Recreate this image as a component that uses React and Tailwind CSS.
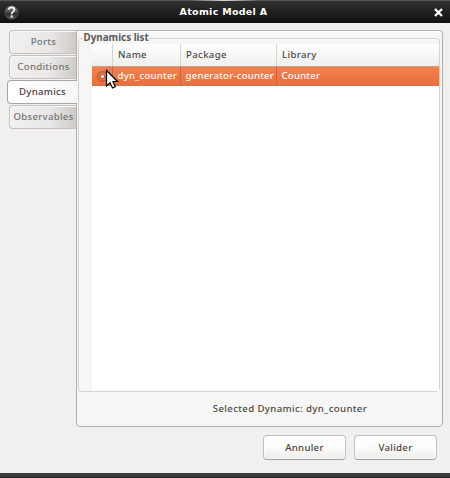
function HelpIcon() {
  return (
    <svg width="15" height="15" viewBox="0 0 15 15" className="block">
      <defs>
        <linearGradient id="orb" x1="0" y1="0" x2="0" y2="1">
          <stop offset="0" stopColor="#8c8c8c" />
          <stop offset="0.5" stopColor="#484848" />
          <stop offset="0.55" stopColor="#242424" />
          <stop offset="1" stopColor="#626262" />
        </linearGradient>
      </defs>
      <circle cx="7.5" cy="7.5" r="6.7" fill="url(#orb)" stroke="#505050" strokeWidth="0.7" />
      <path d="M4.6 4.6C5 2.9 6.1 2.3 7.6 2.3C9.5 2.3 10.4 3.2 10.4 4.7C10.4 6.7 7.7 6.7 7.6 9.3" fill="none" stroke="#f2f2f2" strokeWidth="1.8" />
      <rect x="6.6" y="10.4" width="2.1" height="2.1" fill="#f2f2f2" />
    </svg>
  );
}

function Tab({ label, active }) {
  return active ? (
    <div className="relative z-10 -mr-px h-[24px] w-[70px] rounded-l-[4px] border border-r-0 border-[#aaa69f] bg-gradient-to-r from-white to-[#f6f6f6] text-center leading-[22px] text-[#444]">
      {label}
    </div>
  ) : (
    <div className="h-[24px] w-[67px] rounded-l-[4px] border border-r-0 border-[#c5c2bd] bg-gradient-to-r from-[#f1f0ee] via-[#e9e8e6] via-60% to-[#cecbc6] pl-px text-center leading-[22px] text-[#747474] shadow-[inset_1px_1px_0_#f8f8f7]">
      {label}
    </div>
  );
}

function Button({ label }) {
  return (
    <button className="h-[25px] w-[83px] rounded-[4px] border border-[#c3c0bb] border-b-[#a19d97] bg-gradient-to-b from-white via-[#fbfbfb] to-[#ececea] text-center leading-[22px] text-[#444] shadow-[inset_0_0_0_1px_#ffffff90]">
      {label}
    </button>
  );
}

export default function App() {
  return (
    <div className="flex h-[478px] w-[450px] flex-col overflow-hidden bg-[#f1f0ee] font-['Noto_Sans',sans-serif] text-[9.6px] font-medium tracking-[0.3px] whitespace-nowrap text-[#484848]">
      <header className="relative flex h-[23px] shrink-0 items-center border-t border-[#555755] bg-gradient-to-b from-[#303130] to-[#101010] pr-[7px] pl-[4px]">
        <div className="absolute -top-px left-[190px] h-px w-[70px] bg-gradient-to-r from-transparent via-[#d5d5d5] to-transparent" />
        <HelpIcon />
        <h1 className="ml-[-6px] flex-1 text-center font-['DejaVu_Sans',sans-serif] text-[9.5px] font-bold tracking-[0.3px] text-white">
          Atomic Model A
        </h1>
        <svg width="9" height="9" viewBox="0 0 9 9">
          <path d="M1 1L8 8M8 1L1 8" stroke="white" strokeWidth="2.3" />
        </svg>
      </header>
      <main className="flex h-[404px] shrink-0 pt-[7px] pr-[7px] pl-[7px]">
        <nav className="flex w-[69px] shrink-0 flex-col items-end gap-px">
          <Tab label="Ports" />
          <Tab label="Conditions" />
          <Tab label="Dynamics" active />
          <Tab label="Observables" />
        </nav>
        <section className="h-[397px] w-[367px] rounded-r-[4px] rounded-bl-[4px] border border-[#b1aea8] bg-[#f6f6f6] pt-[7px] pl-px shadow-[inset_0_1px_0_#fff]">
          <div className="relative h-[354px] w-[362px] rounded-[4px] border border-[#d3d3d3] pt-[5px] pl-[13px]">
            <div className="absolute -top-[7px] left-[4px] bg-[#f6f6f6] pl-[0.5px] text-[9.8px] leading-[12px] font-bold tracking-[0.02px] text-[#5a5a5a]">
              Dynamics list
            </div>
            <div className="h-[347px] w-[347px] bg-white">
              <div className="grid h-[23px] grid-cols-[21px_68px_96px_162px] border-b border-[#aaa9a3] bg-gradient-to-b from-white to-[#efefed] leading-[22px] tracking-[0.36px]">
                <span className="border-r border-[#d3d3d1]" />
                <span className="border-r border-[#d3d3d1] pl-[5px]">Name</span>
                <span className="border-r border-[#d3d3d1] pl-[5px]">Package</span>
                <span className="pl-[5px]">Library</span>
              </div>
              <div className="grid h-[19px] grid-cols-[21px_68px_96px_162px] bg-gradient-to-b from-[#f58150] to-[#e96d3b] leading-[18px] tracking-[0.22px] text-white">
                <span className="relative border-r border-[#c96640]">
                  <svg className="absolute top-[4px] left-[5px]" width="11" height="11" viewBox="0 0 11 11">
                    <circle cx="5.5" cy="5.5" r="4.8" fill="none" stroke="#a84d2a" strokeWidth="1" />
                    <circle cx="5.5" cy="5.5" r="2.6" fill="#b85b35" />
                    <circle cx="5.5" cy="5.5" r="1.6" fill="white" />
                  </svg>
                  <svg className="absolute top-[2px] left-[13px] z-10" width="15" height="21" viewBox="0 0 15 21">
                    <path d="M1.5 1.5V17L5 13.8L7.5 19L10.3 17.7L8 12.5H12.5Z" fill="white" stroke="black" strokeWidth="1.2" />
                  </svg>
                </span>
                <span className="border-r border-[#c96640] pl-[4.5px]">dyn_counter</span>
                <span className="border-r border-[#c96640] pl-[4.5px]">generator-counter</span>
                <span className="pl-[4.5px]">Counter</span>
              </div>
            </div>
          </div>
          <p className="h-[34px] pl-[60px] text-center leading-[34px] tracking-[0.38px]">Selected Dynamic: dyn_counter</p>
        </section>
      </main>
      <div className="flex flex-1 items-start justify-end gap-[8px] pt-[8px] pr-[13px]">
        <Button label="Annuler" />
        <Button label="Valider" />
      </div>
      <footer className="h-[5px] shrink-0 border-b border-[#242424] bg-[#3c3c3c]" />
    </div>
  );
}
